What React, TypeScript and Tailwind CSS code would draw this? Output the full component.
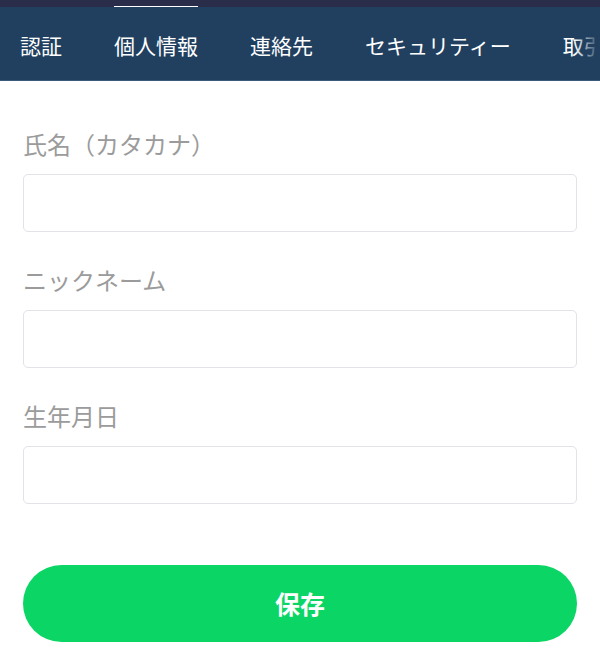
import React from "react";

const tabs = ["認証", "個人情報", "連絡先", "セキュリティー", "取引"];

function Field({ label }: { label: string }) {
  return (
    <div className="flex flex-col">
      <div className="text-[24px] leading-[36px] text-[#9b9b9b]">{label}</div>
      <div className="mt-[12px] h-[58px] rounded-[5px] border border-[#e2e2e8] bg-white" />
    </div>
  );
}

export default function App() {
  return (
    <div
      className="w-[600px] h-[662px] overflow-hidden bg-white"
      style={{ fontFamily: '"Noto Sans CJK JP", "Noto Sans", sans-serif' }}
    >
      <div className="relative h-[7px] bg-[#2a2d4a]">
        <div className="absolute left-[114px] bottom-[-1px] h-[2px] w-[84px] bg-white" />
      </div>
      <div className="relative h-[74px] border-b border-[#3d5a7a] bg-[#21405f] overflow-hidden">
        <div className="flex h-full items-center gap-[52px] whitespace-nowrap pl-[20px] pt-[4px]">
          {tabs.map((t) => (
            <span key={t} className="text-[21px] leading-none text-white">
              {t}
            </span>
          ))}
        </div>
        <div className="absolute right-0 top-0 h-full w-[26px] bg-gradient-to-r from-[#21405f]/0 to-[#21405f]" />
      </div>
      <div className="flex flex-col gap-[30px] px-[23px] pt-[45px]">
        <Field label="氏名（カタカナ）" />
        <Field label="ニックネーム" />
        <Field label="生年月日" />
      </div>
      <div className="px-[23px] pt-[61px]">
        <button className="flex h-[77px] w-full items-center justify-center rounded-full bg-[#0bd665] text-[25px] font-bold text-white">
          保存
        </button>
      </div>
    </div>
  );
}
